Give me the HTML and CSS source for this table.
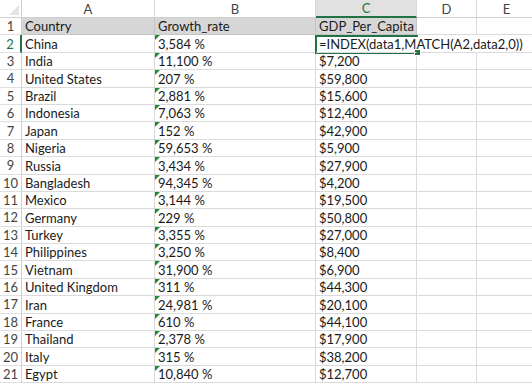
FILE: index.html
```html
<!DOCTYPE html>
<html>
<head>
<meta charset="utf-8">
<link rel="stylesheet" href="styles.css">
</head>
<body>
<div class="sheet">
  <div class="grid">
    <div class="corner"><span class="corner-tri"></span></div>
    <div class="colhead">A</div>
    <div class="colhead">B</div>
    <div class="colhead sel">C</div>
    <div class="colhead">D</div>
    <div class="colhead">E</div>

    <div class="rowhead">1</div>
    <div class="cell hdr">Country</div>
    <div class="cell hdr">Growth_rate</div>
    <div class="cell hdr">GDP_Per_Capita</div>
    <div class="cell"></div>
    <div class="cell"></div>

    <div class="rowhead sel">2</div>
    <div class="cell">China</div>
    <div class="cell txt">3,584 %</div>
    <div class="cell formula nob">=INDEX(data1,MATCH(A2,data2,0))</div>
    <div class="cell nob"></div>
    <div class="cell"></div>

    <div class="rowhead">3</div><div class="cell">India</div><div class="cell txt">11,100 %</div><div class="cell">$7,200</div><div class="cell"></div><div class="cell"></div>
    <div class="rowhead">4</div><div class="cell">United States</div><div class="cell txt">207 %</div><div class="cell">$59,800</div><div class="cell"></div><div class="cell"></div>
    <div class="rowhead">5</div><div class="cell">Brazil</div><div class="cell txt">2,881 %</div><div class="cell">$15,600</div><div class="cell"></div><div class="cell"></div>
    <div class="rowhead">6</div><div class="cell">Indonesia</div><div class="cell txt">7,063 %</div><div class="cell">$12,400</div><div class="cell"></div><div class="cell"></div>
    <div class="rowhead">7</div><div class="cell">Japan</div><div class="cell txt">152 %</div><div class="cell">$42,900</div><div class="cell"></div><div class="cell"></div>
    <div class="rowhead">8</div><div class="cell">Nigeria</div><div class="cell txt">59,653 %</div><div class="cell">$5,900</div><div class="cell"></div><div class="cell"></div>
    <div class="rowhead">9</div><div class="cell">Russia</div><div class="cell txt">3,434 %</div><div class="cell">$27,900</div><div class="cell"></div><div class="cell"></div>
    <div class="rowhead">10</div><div class="cell">Bangladesh</div><div class="cell txt">94,345 %</div><div class="cell">$4,200</div><div class="cell"></div><div class="cell"></div>
    <div class="rowhead">11</div><div class="cell">Mexico</div><div class="cell txt">3,144 %</div><div class="cell">$19,500</div><div class="cell"></div><div class="cell"></div>
    <div class="rowhead">12</div><div class="cell">Germany</div><div class="cell txt">229 %</div><div class="cell">$50,800</div><div class="cell"></div><div class="cell"></div>
    <div class="rowhead">13</div><div class="cell">Turkey</div><div class="cell txt">3,355 %</div><div class="cell">$27,000</div><div class="cell"></div><div class="cell"></div>
    <div class="rowhead">14</div><div class="cell">Philippines</div><div class="cell txt">3,250 %</div><div class="cell">$8,400</div><div class="cell"></div><div class="cell"></div>
    <div class="rowhead">15</div><div class="cell">Vietnam</div><div class="cell txt">31,900 %</div><div class="cell">$6,900</div><div class="cell"></div><div class="cell"></div>
    <div class="rowhead">16</div><div class="cell">United Kingdom</div><div class="cell txt">311 %</div><div class="cell">$44,300</div><div class="cell"></div><div class="cell"></div>
    <div class="rowhead">17</div><div class="cell">Iran</div><div class="cell txt">24,981 %</div><div class="cell">$20,100</div><div class="cell"></div><div class="cell"></div>
    <div class="rowhead">18</div><div class="cell">France</div><div class="cell txt">610 %</div><div class="cell">$44,100</div><div class="cell"></div><div class="cell"></div>
    <div class="rowhead">19</div><div class="cell">Thailand</div><div class="cell txt">2,378 %</div><div class="cell">$17,900</div><div class="cell"></div><div class="cell"></div>
    <div class="rowhead">20</div><div class="cell">Italy</div><div class="cell txt">315 %</div><div class="cell">$38,200</div><div class="cell"></div><div class="cell"></div>
    <div class="rowhead">21</div><div class="cell">Egypt</div><div class="cell txt">10,840 %</div><div class="cell">$12,700</div><div class="cell"></div><div class="cell"></div>
  </div>
  <div class="selbox"><span class="handle"></span></div>
</div>
</body>
</html>
```

FILE: styles.css
```css
html, body {
  margin: 0;
  padding: 0;
  background: #fff;
}
body {
  font-family: Lato, "Open Sans", "Liberation Sans", sans-serif;
  font-size: 13px;
  color: #1a1a1a;
  overflow: hidden;
}
.sheet {
  position: relative;
  width: 532px;
  height: 385px;
  overflow: hidden;
}
.grid {
  display: grid;
  grid-template-columns: 22px 133px 161px 101px 60px 60px;
  grid-template-rows: 18px repeat(21, 17.4px);
}
.corner {
  position: relative;
  border-right: 1px solid #cfcfcf;
  border-bottom: 1px solid #cfcfcf;
  background: #fff;
}
.corner-tri {
  position: absolute;
  right: 2px;
  bottom: 2px;
  width: 0;
  height: 0;
  border-left: 10px solid transparent;
  border-bottom: 10px solid #e4e4e4;
}
.colhead {
  border-right: 1px solid #d9d9d9;
  border-bottom: 1px solid #cfcfcf;
  display: flex;
  align-items: center;
  justify-content: center;
  color: #444;
  font-size: 13px;
  background: #fff;
}
.colhead.sel {
  background: #e1e1e1;
  color: #217346;
  border-bottom: 2px solid #217346;
}
.rowhead {
  border-right: 1px solid #cfcfcf;
  border-bottom: 1px solid #e0e0e0;
  display: flex;
  align-items: center;
  justify-content: center;
  color: #444;
  font-size: 13px;
  background: #fff;
}
.rowhead.sel {
  color: #217346;
  border-right: 2px solid #217346;
}
.cell {
  position: relative;
  border-right: 1px solid #dadada;
  border-bottom: 1px solid #dadada;
  padding: 0 3px;
  display: flex;
  align-items: flex-end;
  white-space: nowrap;
  line-height: 16px;
}
.cell.hdr {
  background: #d6d6d6;
  border-right-color: #c4c4c4;
  border-bottom-color: #c4c4c4;
}
.cell.nob {
  border-right-color: transparent;
}
.cell.formula {
  overflow: visible;
  z-index: 3;
}
.cell.txt::before {
  content: "";
  position: absolute;
  left: 0;
  top: 0;
  width: 0;
  height: 0;
  border-top: 5px solid #1e8a3a;
  border-right: 5px solid transparent;
}
.selbox {
  position: absolute;
  left: 315px;
  top: 35px;
  width: 101px;
  height: 15px;
  border: 2px solid #217346;
  border-right: none;
  z-index: 2;
  pointer-events: none;
}
.handle {
  position: absolute;
  right: -3px;
  bottom: -4px;
  width: 5px;
  height: 5px;
  background: #217346;
  border: 1px solid #fff;
}
```
